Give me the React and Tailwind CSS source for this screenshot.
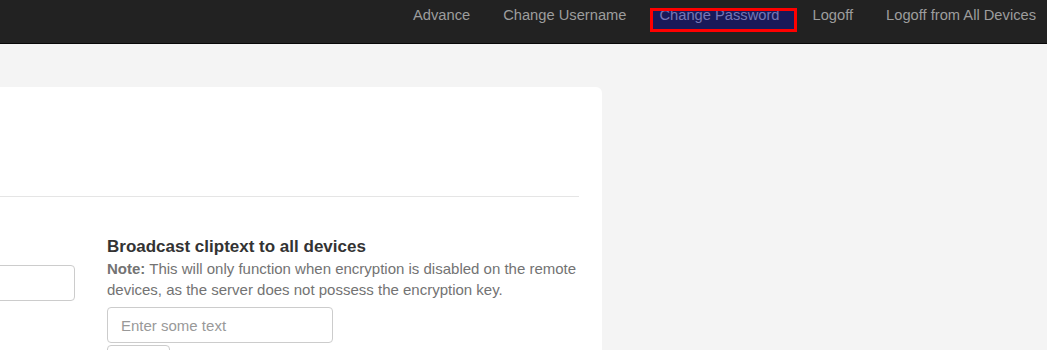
import React from 'react';

const NAV_LINKS = ['Advance', 'Change Username', 'Change Password', 'Logoff', 'Logoff from All Devices'];

const App = () => {
  return (
    <div className="min-h-screen bg-[#f4f4f4] overflow-hidden" style={{ fontFamily: '"Liberation Sans", Arial, sans-serif' }}>
      {/* Navbar */}
      <div className="h-[44px] bg-[#222222] border-b border-[#080808] flex justify-end pr-[11px]">
        <div className="flex gap-[33px] pt-[5px]">
          {NAV_LINKS.map((label) => (
            <a key={label} className="relative h-[20px] text-[14.7px] leading-[20px] text-[#9d9d9d] whitespace-nowrap">
              {label}
              {label === 'Change Password' && (
                <span className="absolute -left-[9px] -right-[18px] top-[3px] h-[24px] border-[3px] border-[#ff0000] bg-[rgba(0,0,255,0.25)]" />
              )}
            </a>
          ))}
        </div>
      </div>

      {/* Card */}
      <div className="mt-[43px] ml-[-420px] w-[1022px] bg-white rounded-[6px] pl-[23px] pr-[23px]">
        <div className="h-[109px]" />
        <hr className="border-0 border-t border-[#e5e5e5]" />

        <div className="grid grid-cols-2 gap-[32px] pt-[40px]">
          {/* Left column */}
          <div className="pt-[28px]">
            <input
              className="w-full h-[36px] border border-[#cccccc] rounded-[4px] px-3 text-[15px]"
            />
          </div>

          {/* Right column */}
          <div>
            <h4 className="text-[17px] leading-[20px] font-bold text-[#333333]">
              Broadcast cliptext to all devices
            </h4>
            <p className="mt-[1px] text-[15px] leading-[21px] text-[#737373]">
              <b>Note:</b> This will only function when encryption is disabled on the remote devices, as the server does not possess the encryption key.
            </p>
            <input
              placeholder="Enter some text"
              className="mt-[7px] block w-[226px] h-[36px] border border-[#cccccc] rounded-[4px] pl-[13px] pr-3 text-[15px] text-[#555555] placeholder:text-[#999999] outline-none"
            />
            <button className="mt-[2px] w-[63px] h-[34px] border border-[#cccccc] rounded-[4px] bg-white text-[15px] text-[#333333]">
              Send
            </button>
          </div>
        </div>
      </div>
    </div>
  );
};

export default App;
